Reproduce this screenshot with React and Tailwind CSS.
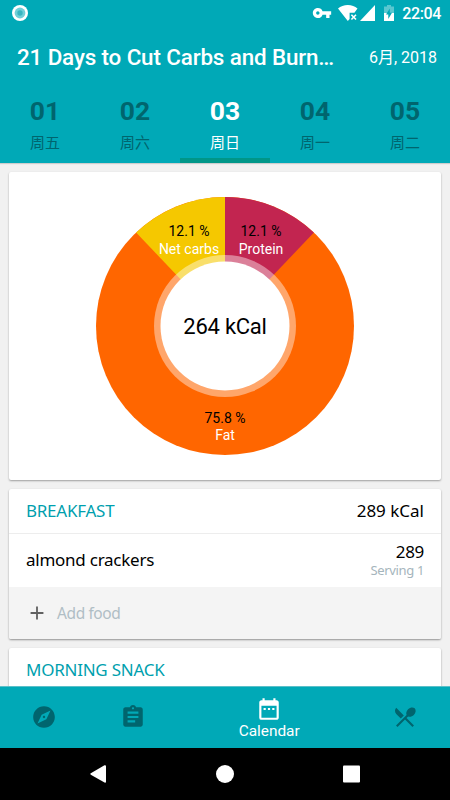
import { useState } from "react";
import {
  MdAdd,
  MdAssignment,
  MdDateRange,
  MdExplore,
  MdRestaurantMenu,
  MdVpnKey,
} from "react-icons/md";

const days = [
  { num: "01", name: "周五" },
  { num: "02", name: "周六" },
  { num: "03", name: "周日" },
  { num: "04", name: "周一" },
  { num: "05", name: "周二" },
];

const tabs = [
  { label: "Explore", Icon: MdExplore },
  { label: "Plan", Icon: MdAssignment },
  { label: "Calendar", Icon: MdDateRange },
  { label: "Recipes", Icon: MdRestaurantMenu },
];

export default function App() {
  const [day, setDay] = useState("03");
  const [tab, setTab] = useState("Calendar");

  return (
    <div className="w-[450px] h-[800px] flex flex-col overflow-hidden bg-[#f1f1f1] font-['Roboto','Noto_Sans_CJK_SC',sans-serif]">
      {/* Header */}
      <header className="h-[163px] shrink-0 flex flex-col bg-[#00a9b7] text-white shadow-[0_1px_1px_rgba(0,0,0,0.15)]">
        <StatusBar />
        <div className="h-[60px] flex items-center justify-between pl-[17px] pr-[13px]">
          <h1 className="text-[22.4px] leading-7 mb-[2px] tracking-[-0.13px] font-medium whitespace-nowrap">
            21 Days to Cut Carbs and Burn…
          </h1>
          <span className="text-[16px] whitespace-nowrap">6月, 2018</span>
        </div>
        <div className="flex-1 flex">
          {days.map((d) => (
            <button
              key={d.num}
              onClick={() => setDay(d.num)}
              className={`w-[90px] flex flex-col items-center pt-[7px] border-b-[5px] ${
                d.num === day
                  ? "text-white border-[#009688]"
                  : "text-[#00656e] border-transparent"
              }`}
            >
              <span className="text-[26.5px] leading-[32px] font-bold">{d.num}</span>
              <span className="text-[15px] leading-[20px] mt-[6px]">{d.name}</span>
            </button>
          ))}
        </div>
      </header>

      {/* Content */}
      <main className="flex-1 min-h-0 overflow-hidden flex flex-col gap-[9px] px-[9px] pt-[9px]">
        <section className="h-[308px] shrink-0 bg-white rounded-xs shadow-[0_1px_2px_rgba(0,0,0,0.35)] flex justify-center pt-[24px]">
          <MacroChart />
        </section>
        <Meal
          title="BREAKFAST"
          total="289 kCal"
          foods={[{ name: "almond crackers", kcal: 289, serving: "Serving 1" }]}
        />
        <Meal title="MORNING SNACK" foods={[]} />
      </main>

      {/* Bottom tabs */}
      <nav className="relative h-[62px] shrink-0 flex bg-[#00a9b7] border-t border-[#5bbfc8]">
        {tabs.map(({ label, Icon }) => (
          <button
            key={label}
            aria-label={label}
            onClick={() => setTab(label)}
            className={`flex flex-col items-center pr-px ${
              tab === label
                ? "w-[182px] text-white pt-[9px]"
                : "flex-1 text-[#00656e] pt-[17px]"
            }`}
          >
            <Icon size={26} />
            {tab === label && (
              <span className="text-[15.4px] leading-5 -mt-px">{label}</span>
            )}
          </button>
        ))}
      </nav>

      <SystemBar />
    </div>
  );
}

function StatusBar() {
  return (
    <div className="h-[28px] flex items-center justify-between pl-[12px] pr-[9px]">
      <svg width="16" height="16" viewBox="0 0 16 16" className="mt-[-2px]">
        <circle cx="8" cy="8" r="8" fill="#fff" />
        <circle cx="8" cy="8" r="5.4" fill="#6fd0d8" />
        <circle cx="8" cy="8" r="2.7" fill="#38b5c1" />
      </svg>
      <div className="flex items-center">
        <MdVpnKey size={20} className="mr-[6px] mt-[-2px]" />
        {/* wifi without connection */}
        <svg width="20" height="16" viewBox="0 0 20 16" className="mr-[2px] mt-[-2px]">
          <path
            d="M0 3.6C2.6 1.4 6 0 9.8 0s7.2 1.4 9.7 3.6L16.4 7.8H11.6V14L9.8 16z"
            fill="currentColor"
          />
          <path
            d="M13.4 9.7l4.6 4.8M18 9.7l-4.6 4.8"
            stroke="currentColor"
            strokeWidth="1.6"
          />
        </svg>
        <svg width="15" height="16" viewBox="0 0 15 16" className="mr-[9px] mt-[-2px]">
          <path d="M15 0v16H0z" fill="currentColor" />
        </svg>
        {/* battery */}
        <svg width="10" height="16" viewBox="0 0 10 16" className="mr-[8px] mt-[-2px]">
          <path d="M3 0h4v1.6h3V8H0V1.6h3z" fill="#fff" fillOpacity="0.35" />
          <path d="M0 8h10v8H0z" fill="#fff" />
          <path d="M5.8 3.4v4.4H8L4.3 14V9.6H2z" fill="#00a9b7" />
        </svg>
        <span className="text-[16px] leading-5 tracking-[-0.35px] font-medium">22:04</span>
      </div>
    </div>
  );
}

function MacroChart() {
  return (
    <svg
      width="260"
      height="260"
      viewBox="-130 -130 260 260"
      className="font-['Roboto',sans-serif]"
      textAnchor="middle"
    >
      <circle r="129" fill="#ff6600" />
      <path d="M0 0L-88.9 -93.5A129 129 0 0 1 0 -129z" fill="#f5c800" />
      <path d="M0 0V-129A129 129 0 0 1 88.9 -93.5z" fill="#c22550" />
      <circle r="71" fill="#fff" fillOpacity="0.42" />
      <circle r="64.5" fill="#fff" />
      <g className="text-[14px]">
        <text x="-36" y="-90" fill="#000">12.1 %</text>
        <text x="-36" y="-72.4" fill="#fff">Net carbs</text>
        <text x="36" y="-90" fill="#000">12.1 %</text>
        <text x="36" y="-72.4" fill="#fff">Protein</text>
        <text x="0" y="97" fill="#000">75.8 %</text>
        <text x="0" y="114" fill="#fff">Fat</text>
      </g>
      <text x="0" y="7.5" fill="#000" className="text-[22px] tracking-[-0.25px]">
        264 kCal
      </text>
    </svg>
  );
}

function Meal({ title, total, foods }) {
  return (
    <section className="shrink-0 bg-white rounded-xs shadow-[0_1px_2px_rgba(0,0,0,0.4)] font-['Noto_Sans',sans-serif] text-black">
      <div className="h-[45px] flex items-center justify-between px-[17px] border-b border-[#ededed]">
        <h2 className="text-[17px] tracking-[-0.25px] text-[#009fae]">{title}</h2>
        <span className="text-[17px]">{total}</span>
      </div>
      {foods.map((f) => (
        <div key={f.name} className="h-[53px] flex items-center justify-between px-[17px]">
          <span className="text-[17px] leading-[24px] mb-px tracking-[-0.25px]">{f.name}</span>
          <div className="flex flex-col items-end">
            <span className="text-[17px] leading-[20px] tracking-[-0.3px]">{f.kcal}</span>
            <span className="text-[13px] leading-[17px] tracking-[-0.35px] text-[#a5b5bc]">
              {f.serving}
            </span>
          </div>
        </div>
      ))}
      {foods.length > 0 && (
        <button className="w-full h-[52px] flex items-center pl-[17px] bg-[#f4f4f4] rounded-b-xs">
          <MdAdd size={22} className="text-[#616161]" />
          <span className="ml-[9px] mt-px text-[15.5px] tracking-[-0.4px] text-[#b0bec5]">
            Add food
          </span>
        </button>
      )}
    </section>
  );
}

function SystemBar() {
  return (
    <div className="h-[52px] shrink-0 bg-black flex items-center justify-center">
      <svg width="270" height="18" viewBox="0 0 270 18" fill="#fff">
        <path d="M.8 8.3L14.5.3Q16 0 16 1.2v15.6q0 1.2-1.5.8L.8 9.7q-1-.7 0-1.4z" />
        <circle cx="135" cy="9" r="9" />
        <rect x="253" y="0.5" width="17" height="17" rx="1" />
      </svg>
    </div>
  );
}
